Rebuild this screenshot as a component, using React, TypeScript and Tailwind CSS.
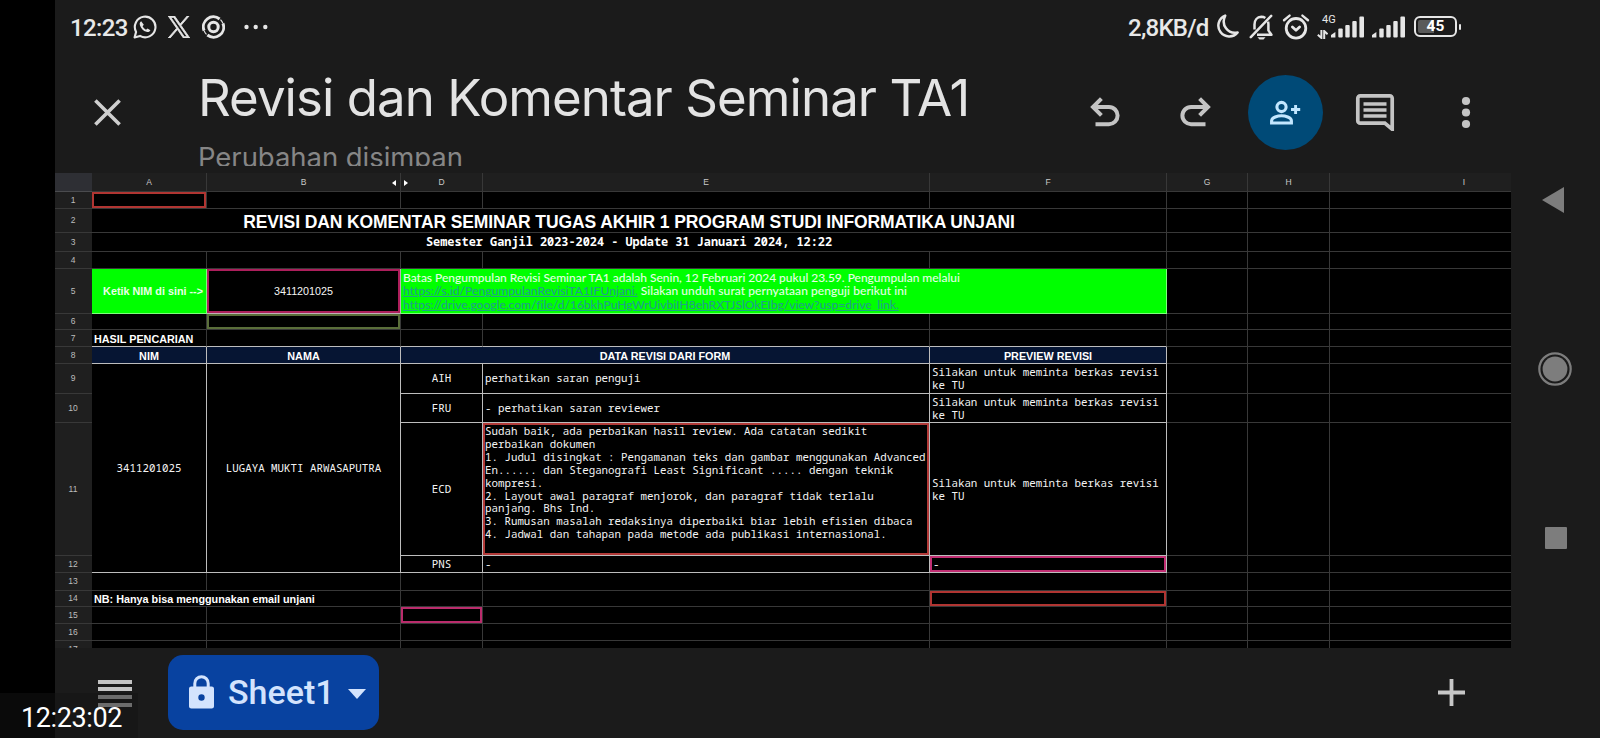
import type { ReactNode } from "react";

const MONO = "font-['Noto_Sans_Mono','DejaVu_Sans_Mono',monospace]";
const ARIAL = "font-['Liberation_Sans',sans-serif]";
const LINE = "border-[#383838]";
const WHITE = "border-[#bdbdbd]";

function Signal() {
  return (
    <svg className="shrink-0" width="33" height="22" viewBox="0 0 33 22" fill="#e6e6e6">
      <path d="M0 21.5V19L4.4 16V21.5Z" />
      <rect x="7.3" y="12.5" width="4.4" height="9" rx="1" />
      <rect x="14.3" y="9" width="4.4" height="12.5" rx="1" />
      <rect x="21.3" y="5" width="4.4" height="16.5" rx="1" />
      <rect x="28.4" y="0.5" width="4.6" height="21" rx="1" />
    </svg>
  );
}

function StatusBar() {
  return (
    <div className="flex h-[53px] items-center pl-[15px] font-['Roboto',sans-serif] text-[#e8e8e8]">
      <div className="w-[64px] pt-[2px] text-[24px] leading-none font-medium whitespace-nowrap tracking-[-0.65px]">12:23</div>
      <svg className="-ml-px shrink-0" width="24" height="24" viewBox="0 0 24 24" fill="none" stroke="#e6e6e6" strokeWidth="2.1">
        <path d="M1.6 22.4 3.1 16.9A10.3 10.3 0 1 1 7 20.9Z" strokeLinejoin="round" />
        <path d="M8.2 6.3C6.8 7 6.4 8.6 7 10.4c1 2.9 3.3 5.4 6.4 6.4 1.8.6 3.5 0 4-1.6l-2.9-1.8-1.5 1.3c-1.5-.6-2.7-1.9-3.4-3.4l1.2-1.5Z" fill="#e6e6e6" stroke="none" />
      </svg>
      <svg className="ml-[11px] shrink-0" width="22" height="22" viewBox="0 0 24 24" fill="#e6e6e6">
        <path d="M14.23 10.16 22.98 0h-2.07l-7.6 8.82L7.24 0H.24l9.18 13.34L.24 24h2.07l8.03-9.32L16.76 24h7zm-2.84 3.3-.93-1.33L3.05 1.56h3.19l5.97 8.54.93 1.33 7.76 11.1h-3.18z" stroke="#e6e6e6" strokeWidth="0.9" />
      </svg>
      <svg className="ml-[12px] shrink-0" width="23" height="24" viewBox="0 0 23 24" fill="none" stroke="#e6e6e6">
        <circle cx="11.5" cy="12" r="4.7" strokeWidth="3" />
        <path d="M2.1 15.6A10 10 0 0 1 17.6 4" strokeWidth="2.9" />
        <path d="M20.9 8.4A10 10 0 0 1 5.4 20" strokeWidth="2.9" />
        <path d="M18.5 4.6A10.2 10.2 0 0 1 20.9 8.4M4.5 19.4A10.2 10.2 0 0 1 2.1 15.6" strokeWidth="1.2" />
      </svg>
      <svg className="ml-[18px] shrink-0" width="26" height="6" viewBox="0 0 26 6" fill="#e6e6e6">
        <circle cx="3.5" cy="3" r="2.2" />
        <circle cx="12.7" cy="3" r="2.2" />
        <circle cx="22.3" cy="3" r="2.2" />
      </svg>
      <div className="ml-[859px] w-[86px] shrink-0 pt-[2px] text-[24px] leading-none font-medium whitespace-nowrap tracking-[-0.75px]">2,8KB/d</div>
      <svg className="ml-px shrink-0" width="24" height="26" viewBox="0 0 24 26" fill="none" stroke="#e6e6e6" strokeWidth="2.5" strokeLinejoin="round">
        <path d="M10.2 1.6A10.8 10.8 0 1 0 22.6 18.4C12.8 20.4 5.6 11 10.2 1.6Z" />
      </svg>
      <svg className="ml-[10px] shrink-0" width="25" height="28" viewBox="0 0 25 28" fill="none" stroke="#e6e6e6" strokeWidth="2.5" strokeLinejoin="round">
        <path d="M5.5 16.5V11.5C5.5 7 8.3 4 12.2 3.8c1.6 0 3 .4 4.1 1.2M19 8.6c.3 1 .4 2 .4 3v5.8l3 4.4H8" />
        <path d="M22.2 2.8 1.8 24.2" strokeLinecap="round" />
        <path d="M8.5 24.2h8l-2 2.4h-4Z" fill="#e6e6e6" stroke="none" />
      </svg>
      <svg className="ml-2 shrink-0" width="28" height="28" viewBox="0 0 28 28" fill="none" stroke="#e6e6e6" strokeWidth="2.8" strokeLinecap="round">
        <circle cx="14" cy="15.3" r="9.8" />
        <path d="M10.4 14 14 17.2 17.6 14" strokeLinejoin="round" />
        <path d="M2 7.2 7.6 2.6M26 7.2 20.4 2.6" strokeWidth="2.4" />
      </svg>
      <div className="ml-[7px] flex w-[14px] shrink-0 flex-col items-start">
        <div className="ml-[5px] text-[11px] leading-[12px] whitespace-nowrap">4G</div>
        <svg className="mt-[4px]" width="11" height="9" viewBox="0 0 11 9" fill="none" stroke="#e6e6e6" strokeWidth="2">
          <path d="M4.4 0V8L.8 4.8M7.2 9V1L10.6 4.2" />
        </svg>
      </div>
      <Signal />
      <div className="w-2 shrink-0" />
      <Signal />
      <div className="ml-[9px] flex h-[21px] w-[43px] shrink-0 items-center justify-center rounded-[6px] border-2 border-[#e6e6e6] bg-linear-to-r from-[#5a5a5a] from-45% to-[#1b1b1b] to-45% bg-clip-content p-[2px]">
        <span className="pt-px text-[15.5px] leading-none font-bold text-white">45</span>
      </div>
      <div className="ml-0.5 h-[6px] w-[2px] rounded bg-[#e6e6e6]" />
    </div>
  );
}

function AppBar() {
  return (
    <div className="flex h-[113px] overflow-hidden">
      <svg className="mt-[45px] ml-[38px] shrink-0" width="29" height="29" viewBox="0 0 29 29" stroke="#cfcfcf" strokeWidth="3.6">
        <path d="M2.4 2.4 26.6 26.6M26.6 2.4 2.4 26.6" />
      </svg>
      <div className="ml-[76px] w-[862px] shrink-0 whitespace-nowrap">
        <div className="mt-[12px] h-[70px] font-['Inter',sans-serif] text-[51px] leading-[66px] tracking-[-0.95px] text-[#e3e3e3]">
          Revisi dan Komentar Seminar TA1
        </div>
        <div className="mt-[2px] font-['Inter',sans-serif] text-[27.5px] leading-[40px] tracking-[-0.05px] text-[#868686]">Perubahan disimpan</div>
      </div>
      <svg className="mt-[42px] ml-[28px] shrink-0" width="34" height="34" viewBox="0 0 34 34" fill="none" stroke="#c4c4c4" strokeWidth="4">
        <path d="M13.4 3.6 5 12 13.4 20.4" />
        <path d="M5 12H21a8.6 8.6 0 0 1 0 17.2H7.5" />
      </svg>
      <svg className="mt-[42px] ml-[56px] shrink-0" width="34" height="34" viewBox="0 0 34 34" fill="none" stroke="#c4c4c4" strokeWidth="4">
        <path d="M21.6 3.6 30 12 21.6 20.4" />
        <path d="M30 12H13a8.6 8.6 0 0 0 0 17.2H27.5" />
      </svg>
      <div className="mt-[22px] ml-[36px] flex size-[75px] shrink-0 items-center justify-center rounded-full bg-[#004a77]">
        <svg className="-ml-px" width="32" height="26" viewBox="0 0 32 26" fill="none" stroke="#c2e7ff" strokeWidth="3.1">
          <circle cx="12.5" cy="7" r="4.6" />
          <path d="M2.6 23V20.8C2.6 17.4 9 15.8 12.5 15.8S22.4 17.4 22.4 20.8V23Z" />
          <path d="M26.6 5V14M22 9.5H31.2" strokeWidth="2.9" />
        </svg>
      </div>
      <svg className="mt-[40px] ml-[32px] shrink-0" width="40" height="40" viewBox="0 0 40 40" fill="none" stroke="#c4c4c4" strokeWidth="3.7">
        <path d="M37 36.2 29.8 30.2H5.2A2.4 2.4 0 0 1 2.8 27.8V5.2A2.4 2.4 0 0 1 5.2 2.8H34.8A2.4 2.4 0 0 1 37.2 5.2V36.2Z" />
        <path d="M8.5 11H31.5M8.5 17H31.5M8.5 23H31.5" />
      </svg>
      <svg className="mt-[42px] ml-[65px] shrink-0" width="12" height="34" viewBox="0 0 12 34" fill="#c4c4c4">
        <circle cx="6" cy="6" r="4.1" />
        <circle cx="6" cy="17.5" r="4.1" />
        <circle cx="6" cy="29" r="4.1" />
      </svg>
    </div>
  );
}

const colStart: Record<string, string> = {
  A: "col-start-2", B: "col-start-3", D: "col-start-4", E: "col-start-5", F: "col-start-6", G: "col-start-7", H: "col-start-8", I: "col-start-9",
};
const rowStart = [
  "row-start-1", "row-start-2", "row-start-3", "row-start-4", "row-start-5", "row-start-6", "row-start-7", "row-start-8", "row-start-9",
  "row-start-10", "row-start-11", "row-start-12", "row-start-13", "row-start-14", "row-start-15", "row-start-16", "row-start-17", "row-start-18",
];

function Cell({ col, row, className = "", mark = "", children }: { col: string; row: number; className?: string; mark?: string; children?: ReactNode }) {
  const edges = `${col === "I" ? "" : "border-r"} ${row === 17 ? "" : "border-b"}`;
  return (
    <div className={`flex min-w-0 items-center ${edges} ${colStart[col]} ${rowStart[row]} ${className || LINE}`}>
      {mark ? <div className={`flex h-full w-full items-center border-2 ${mark}`}>{children}</div> : children}
    </div>
  );
}

const cols = ["A", "B", "D", "E", "F", "G", "H", "I"];
const plainRows = [1, 4, 6, 13, 15, 16, 17];
const marks: Record<string, string> = {
  A1: "border-[#b03532]",
  B6: "border-[#5a6e3a]",
  D15: "border-[#ba2c6c]",
};

const review = [
  "Sudah baik, ada perbaikan hasil review. Ada catatan sedikit",
  "perbaikan dokumen",
  "1. Judul disingkat : Pengamanan teks dan gambar menggunakan Advanced",
  "En...... dan Steganografi Least Significant ..... dengan teknik",
  "kompresi.",
  "2. Layout awal paragraf menjorok, dan paragraf tidak terlalu",
  "panjang. Bhs Ind.",
  "3. Rumusan masalah redaksinya diperbaiki biar lebih efisien dibaca",
  "4. Jadwal dan tahapan pada metode ada publikasi internasional.",
];

function Silakan() {
  return (
    <div className="pb-px pl-[2px] leading-[13px] whitespace-nowrap">
      Silakan untuk meminta berkas revisi
      <br />
      ke TU
    </div>
  );
}

function Sheet() {
  return (
    <div
      className={`grid h-[475px] w-[1456px] shrink-0 grid-cols-[37px_115px_194px_82px_447px_237px_81px_82px_181px] grid-rows-[19px_17px_24px_19px_17px_45px_16px_17px_17px_30px_29px_133px_17px_18px_16px_17px_17px_7px] overflow-hidden bg-black text-[10.8px] text-[#f4f4f4] ${MONO}`}
    >
      <div className="col-start-1 row-start-1 border-b border-[#4a4b4e] bg-[#2e2f34]" />
      {cols.map((c) => (
        <div
          key={c}
          className={`row-start-1 flex items-center justify-center border-b border-[#383838] bg-[#1f1f1f] pt-px text-[8.5px] text-[#c9c9c9] ${ARIAL} ${colStart[c]} ${c === "I" ? "pl-[87px]" : "border-r"} ${c === "B" || c === "D" ? "relative" : ""}`}
        >
          {c}
          {c === "B" && (
            <svg className="absolute top-[7px] right-[4px]" width="4" height="6" viewBox="0 0 4 6" fill="#fff"><path d="M4 0V6L0 3Z" /></svg>
          )}
          {c === "D" && (
            <svg className="absolute top-[7px] left-[3px]" width="4" height="6" viewBox="0 0 4 6" fill="#fff"><path d="M0 0V6L4 3Z" /></svg>
          )}
        </div>
      ))}
      {Array.from({ length: 17 }, (_, i) => (
        <div
          key={i}
          className={`col-start-1 flex justify-center overflow-hidden border-[#383838] bg-[#1f1f1f] pr-px text-[8.5px] leading-[13px] text-[#bdbdbd] ${ARIAL} ${rowStart[i + 1]} ${i === 16 ? "items-start pt-[2px]" : "items-center border-b"}`}
        >
          {i + 1}
        </div>
      ))}

      {plainRows.map((r) => cols.map((c) => <Cell key={c + r} col={c} row={r} mark={marks[c + r]} />))}
      {[2, 3, 5, 7, 8, 9, 10, 11, 12, 14].map((r) => ["G", "H", "I"].map((c) => <Cell key={c + r} col={c} row={r} />))}

      <Cell col="A" row={2} className={`col-span-5 justify-center border-[#383838] pt-[3px] text-[17.5px] tracking-[-0.11px] font-bold whitespace-nowrap text-white ${ARIAL}`}>
        REVISI DAN KOMENTAR SEMINAR TUGAS AKHIR 1 PROGRAM STUDI INFORMATIKA UNJANI
      </Cell>
      <Cell col="A" row={3} className="col-span-5 justify-center border-[#383838] text-[11.88px] font-bold whitespace-nowrap text-white">
        Semester Ganjil 2023-2024 - Update 31 Januari 2024, 12:22
      </Cell>

      <Cell col="A" row={5} className={`justify-end border-[#7dff7d] bg-[#00ff00] pr-[3px] text-[10.8px] font-bold whitespace-nowrap text-[#e9ffe9] ${ARIAL}`}>
        Ketik NIM di sini --&gt;
      </Cell>
      <Cell col="B" row={5} className={`border-[#c0b0b8] ${ARIAL} text-[10.75px]`} mark="justify-center border-[#ad1f5c]">
        3411201025
      </Cell>
      <Cell col="D" row={5} className="col-span-3 border-[#7dff7d] bg-[#00ff00] font-['Lato',sans-serif] text-[12px] text-[#e4ffe4]">
        <div className="pl-[2px] leading-[13.5px] font-medium whitespace-nowrap">
          <div className="tracking-[-0.02px]">Batas Pengumpulan Revisi Seminar TA1 adalah Senin, 12 Februari 2024 pukul 23.59. Pengumpulan melalui</div>
          <div className="tracking-[0.06px]">
            <span className="text-[#1fa08a] underline">https://s.id/PengumpulanRevisiTA1IFUnjani.</span> Silakan unduh surat pernyataan penguji berikut ini
          </div>
          <div className="tracking-[0.01px] text-[#1fa08a] underline">https://drive.google.com/file/d/16bkhPuHgWrUivbiIH8ehRXTJSlOkEIbg/view?usp=drive_link.</div>
        </div>
      </Cell>

      <Cell col="A" row={7} className={`border-[#383838] border-b-[#bdbdbd] pl-[2px] pt-[2px] text-[10.8px] font-bold whitespace-nowrap text-white ${ARIAL}`}>HASIL PENCARIAN</Cell>
      <Cell col="B" row={7} className="border-[#383838] border-b-[#bdbdbd]" />
      <Cell col="D" row={7} className="border-[#383838] border-b-[#bdbdbd]" />
      <Cell col="E" row={7} className="border-[#383838] border-b-[#bdbdbd]" />
      <Cell col="F" row={7} className="border-[#383838] border-b-[#bdbdbd]" />

      <Cell col="A" row={8} className={`justify-center bg-[#061533] pt-[2px] font-bold text-white ${WHITE} ${ARIAL}`}>NIM</Cell>
      <Cell col="B" row={8} className={`justify-center bg-[#061533] pt-[2px] font-bold text-white ${WHITE} ${ARIAL}`}>NAMA</Cell>
      <Cell col="D" row={8} className={`col-span-2 justify-center bg-[#061533] pt-[2px] font-bold text-white ${WHITE} ${ARIAL}`}>DATA REVISI DARI FORM</Cell>
      <Cell col="F" row={8} className={`justify-center bg-[#061533] pt-[2px] font-bold text-white ${WHITE} ${ARIAL}`}>PREVIEW REVISI</Cell>

      <Cell col="A" row={9} className={`row-span-4 justify-center ${WHITE}`}>3411201025</Cell>
      <Cell col="B" row={9} className={`row-span-4 justify-center ${WHITE}`}>LUGAYA MUKTI ARWASAPUTRA</Cell>
      <Cell col="D" row={9} className={`justify-center ${WHITE}`}>AIH</Cell>
      <Cell col="D" row={10} className={`justify-center ${WHITE}`}>FRU</Cell>
      <Cell col="D" row={11} className={`justify-center ${WHITE}`}>ECD</Cell>
      <Cell col="D" row={12} className={`justify-center ${WHITE}`}>PNS</Cell>
      <Cell col="E" row={9} className={`pl-[2px] ${WHITE}`}>perhatikan saran penguji</Cell>
      <Cell col="E" row={10} className={`pl-[2px] ${WHITE}`}>- perhatikan saran reviewer</Cell>
      <Cell col="E" row={11} className={WHITE} mark="border-[#b23a38]">
        <div className="self-start leading-[12.9px] whitespace-nowrap">
          {review.map((line) => (
            <div key={line}>{line}</div>
          ))}
        </div>
      </Cell>
      <Cell col="E" row={12} className={`pl-[2px] ${WHITE}`}>-</Cell>
      <Cell col="F" row={9} className={WHITE}><Silakan /></Cell>
      <Cell col="F" row={10} className={WHITE}><Silakan /></Cell>
      <Cell col="F" row={11} className={WHITE}><Silakan /></Cell>
      <Cell col="F" row={12} className={WHITE} mark="border-[#c02e72] pl-px">-</Cell>

      <div className={`col-span-2 col-start-2 row-start-15 flex items-center border-r border-b border-[#383838] pl-[2px] pt-px text-[10.8px] font-bold whitespace-nowrap text-white ${ARIAL}`}>
        NB: Hanya bisa menggunakan email unjani
      </div>
      <Cell col="D" row={14} />
      <Cell col="E" row={14} />
      <Cell col="F" row={14} mark="border-[#b03532]" />
    </div>
  );
}

function BottomBar() {
  return (
    <div className="flex h-[90px]">
      <div className="mt-[31.5px] ml-[43px] flex w-[34px] flex-col gap-[3.7px]">
        <div className="h-[4px] bg-[#c4c4c4]" />
        <div className="h-[4px] bg-[#c4c4c4]" />
        <div className="h-[4px] bg-[#c4c4c4]" />
        <div className="h-[4px] bg-[#c4c4c4]" />
      </div>
      <div className="mt-[7px] ml-[36px] flex h-[75px] w-[211px] items-center rounded-[15px] bg-[#0842a0] text-[#d3e3fd]">
        <svg className="mt-[-2px] ml-[21px]" width="25" height="34" viewBox="0 0 25 34">
          <path d="M5.8 14V8.4a6.7 6.7 0 0 1 13.4 0V14" fill="none" stroke="#d3e3fd" strokeWidth="3" />
          <path fillRule="evenodd" fill="#d3e3fd" d="M2.5 11.5H22.5A2.4 2.4 0 0 1 25 14V31A2.4 2.4 0 0 1 22.5 33.5H2.5A2.4 2.4 0 0 1 0 31V14A2.4 2.4 0 0 1 2.5 11.5ZM12.5 19.3a3.2 3.2 0 1 0 0 6.4 3.2 3.2 0 1 0 0-6.4Z" />
        </svg>
        <div className="mt-[-2px] ml-[14px] w-[105px] font-['Roboto',sans-serif] text-[34px] leading-none font-medium">Sheet1</div>
        <svg className="mt-[2px] ml-[15px]" width="18" height="10" viewBox="0 0 18 10" fill="#d3e3fd"><path d="M0 0H18L9 10Z" /></svg>
      </div>
      <svg className="mt-[31px] ml-[1059px]" width="27" height="27" viewBox="0 0 27 27" stroke="#c7c7c7" strokeWidth="3.8"><path d="M13.5 0V27M0 13.5H27" /></svg>
    </div>
  );
}

export default function App() {
  return (
    <div className="relative flex h-[738px] w-[1600px] overflow-hidden bg-[#1b1b1b]">
      <div className="w-[55px] shrink-0 bg-black" />
      <div className="flex w-[1456px] shrink-0 flex-col">
        <StatusBar />
        <AppBar />
        <div className="h-[7px] shrink-0" />
        <Sheet />
        <BottomBar />
      </div>
      <div className="flex w-[89px] flex-col items-center">
        <svg className="mt-[187px] mr-[5px]" width="22" height="26" viewBox="0 0 22 26" fill="#7d7d7d"><path d="M0 13 22 0V26Z" /></svg>
        <svg className="mt-[138px] mr-[2px]" width="36" height="36" viewBox="0 0 36 36" fill="#7d7d7d">
          <circle cx="18" cy="18" r="12.4" />
          <circle cx="18" cy="18" r="15.7" fill="none" stroke="#7d7d7d" strokeWidth="2.2" />
        </svg>
        <div className="mt-[140px] size-[22px] rounded-[1px] bg-[#7d7d7d]" />
      </div>
      <div className="absolute bottom-0 left-0 flex h-[45px] w-[138px] items-center bg-[#141414]/50 pt-[5px] pl-[21px] font-['Roboto',sans-serif] text-[27px] leading-none tracking-[-0.4px] text-white">
        12:23:02
      </div>
    </div>
  );
}
